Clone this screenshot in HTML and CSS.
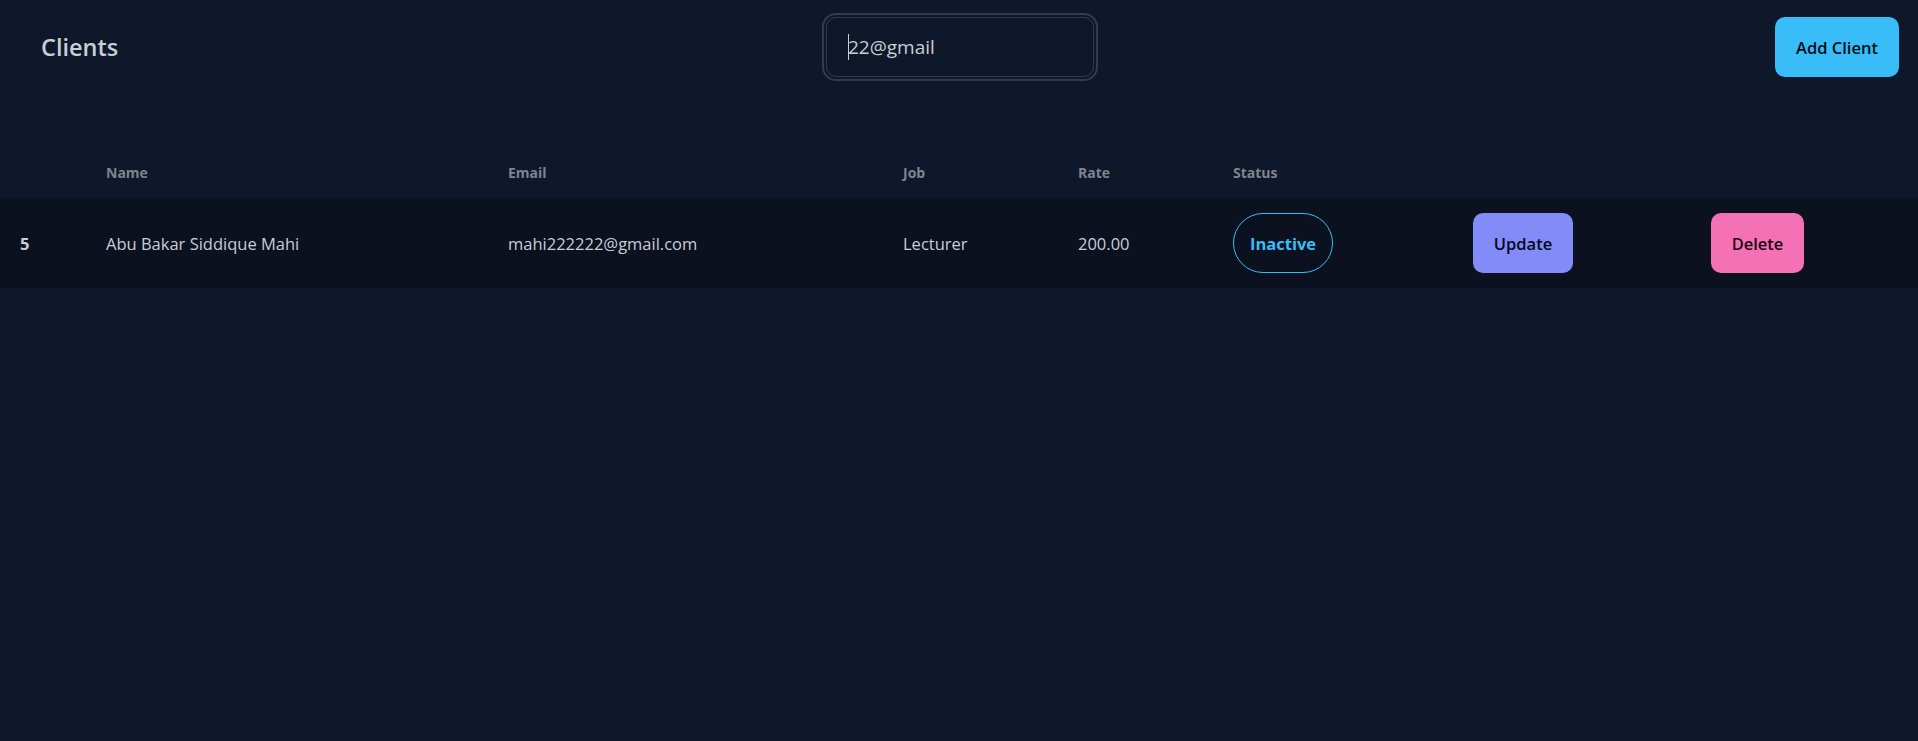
FILE: index.html
```html
<!DOCTYPE html>
<html lang="en">
<head>
<meta charset="utf-8">
<title>Clients</title>
<link rel="stylesheet" href="styles.css">
</head>
<body>
<header class="navbar">
  <div class="nav-start"><span class="title">Clients</span></div>
  <div class="nav-center">
    <div class="search"><span class="caret"></span>22@gmail</div>
  </div>
  <div class="nav-end"><button class="btn btn-primary">Add Client</button></div>
</header>
<main class="content">
  <table class="table">
    <colgroup>
      <col class="c-num"><col class="c-name"><col class="c-email"><col class="c-job">
      <col class="c-rate"><col class="c-status"><col class="c-update"><col class="c-delete">
    </colgroup>
    <thead>
      <tr>
        <th></th>
        <th>Name</th>
        <th>Email</th>
        <th>Job</th>
        <th>Rate</th>
        <th>Status</th>
        <th></th>
        <th></th>
      </tr>
    </thead>
    <tbody>
      <tr class="row">
        <td class="num">5</td>
        <td>Abu Bakar Siddique Mahi</td>
        <td>mahi222222@gmail.com</td>
        <td>Lecturer</td>
        <td>200.00</td>
        <td><button class="pill">Inactive</button></td>
        <td><button class="btn btn-secondary">Update</button></td>
        <td><button class="btn btn-accent">Delete</button></td>
      </tr>
    </tbody>
  </table>
</main>
</body>
</html>
```
FILE: styles.css
```css
html, body {
  margin: 0;
  padding: 0;
}

body {
  background: #0f172a;
  color: #c6cad3;
  font-family: "Open Sans", "Noto Sans", sans-serif;
  min-height: 741px;
}

.navbar {
  display: grid;
  grid-template-columns: 1fr auto 1fr;
  align-items: center;
  height: 94px;
  box-sizing: border-box;
  padding: 17px 19px;
}

.nav-start {
  padding-left: 22px;
}

.title {
  font-size: 23.5px;
  font-weight: 600;
  color: #c9cdd6;
}

.nav-center {
  display: flex;
  justify-content: center;
  padding-left: 2px;
}

.search {
  width: 268px;
  height: 60px;
  box-sizing: border-box;
  border: 1px solid rgba(198, 202, 211, 0.2);
  border-radius: 10px;
  outline: 2px solid rgba(198, 202, 211, 0.2);
  outline-offset: 2px;
  display: flex;
  align-items: center;
  padding-left: 21px;
  font-size: 19px;
  color: #c9cdd6;
}

.caret {
  display: inline-block;
  width: 1px;
  height: 26px;
  background: #c9cdd6;
  margin-right: -1px;
}

.nav-end {
  justify-self: end;
}

.btn {
  height: 60px;
  box-sizing: border-box;
  padding: 0 20px;
  border: none;
  border-radius: 10px;
  font-family: inherit;
  font-size: 16.5px;
  font-weight: 600;
  color: #0a0e1a;
  display: inline-flex;
  align-items: center;
  justify-content: center;
  cursor: pointer;
}

.btn-primary { background: #38bdf8; color: #010d15; min-width: 124px; }
.btn-secondary { background: #818cf8; color: #05061a; min-width: 100px; }
.btn-accent { background: #f471b5; color: #1a0410; min-width: 93px; }

.content {
  margin-top: 54px;
}

.table {
  width: 100%;
  border-collapse: collapse;
  table-layout: fixed;
}

.c-num { width: 86px; }
.c-name { width: 402px; }
.c-email { width: 395px; }
.c-job { width: 175px; }
.c-rate { width: 155px; }
.c-status { width: 240px; }
.c-update { width: 238px; }
.c-delete { width: 227px; }

.table th {
  text-align: left;
  padding: 15px 20px;
  font-size: 14px;
  line-height: 20px;
  font-weight: 700;
  color: #7f848f;
}

.table td {
  padding: 15px 20px;
  font-size: 16.5px;
  line-height: 25px;
  white-space: nowrap;
  color: #c9cdd6;
}

.row {
  background: #0b111f;
}

.table td.num {
  font-weight: 700;
}

.pill {
  height: 60px;
  box-sizing: border-box;
  padding: 0 16px;
  border: 1px solid #38bdf8;
  border-radius: 999px;
  background: transparent;
  color: #38bdf8;
  font-family: inherit;
  font-size: 16.5px;
  font-weight: 700;
  display: inline-flex;
  align-items: center;
  cursor: pointer;
}
```
